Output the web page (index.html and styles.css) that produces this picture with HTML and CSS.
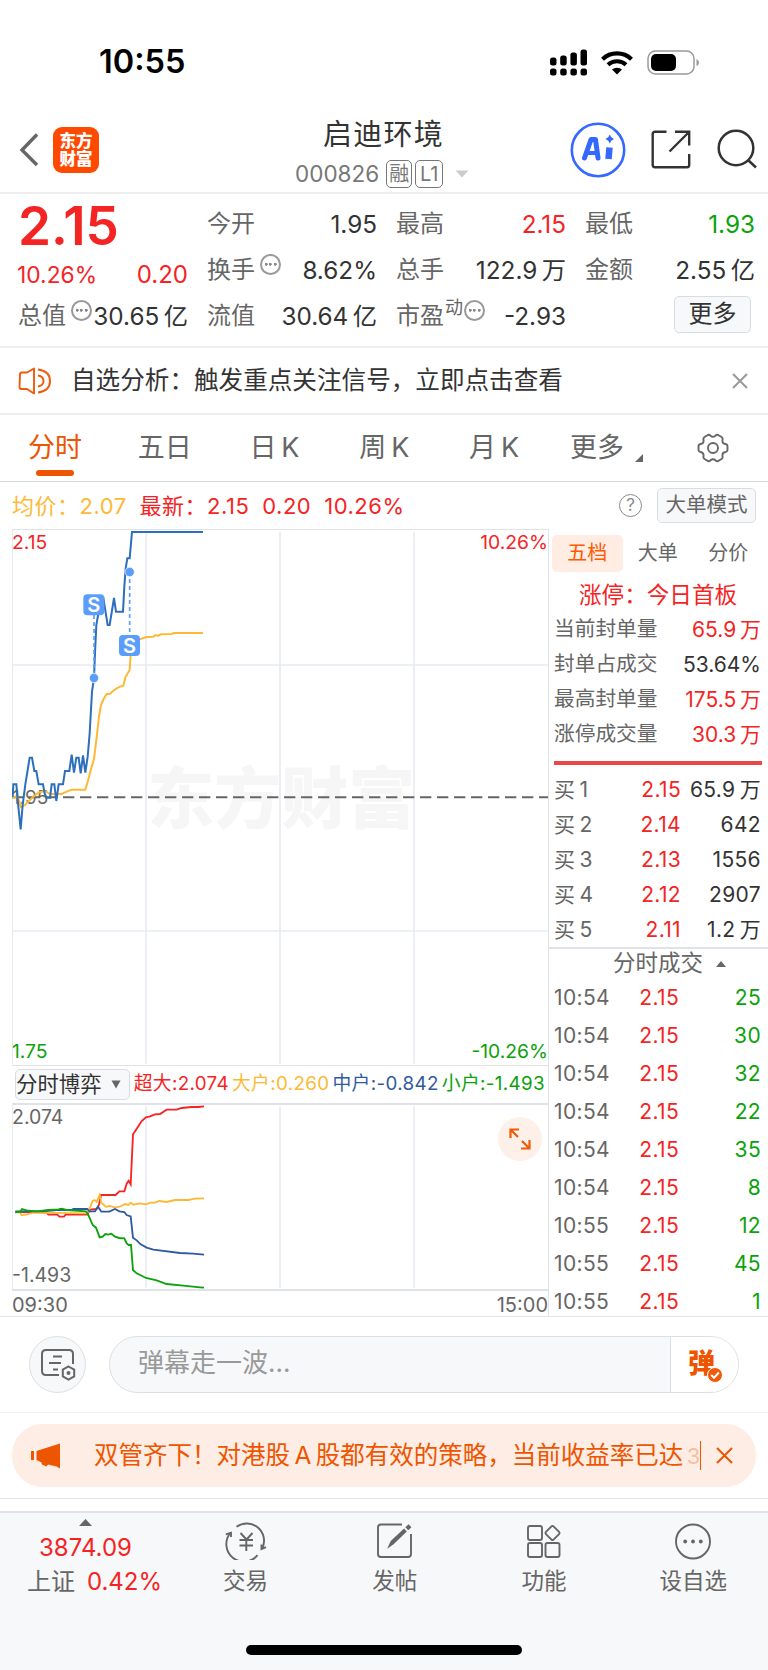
FILE: index.html
```html
<!DOCTYPE html>
<html lang="zh-CN">
<head>
    <meta charset="UTF-8">
    <meta name="viewport" content="width=device-width, initial-scale=1.0">
    <title>启迪环境 000826</title>
    <link rel="stylesheet" href="styles.css">
</head>
<body>
    <div class="status-bar">
        <span class="clock">10:55</span>
        <div class="status-icons">
            <svg class="signal" width="38" height="27" viewBox="0 0 38 27">
                <rect x="0" y="8.500" width="6.500" height="8" rx="2.500"/>
                <rect x="10.200" y="6.500" width="6.500" height="10" rx="2.500"/>
                <rect x="20.400" y="3.500" width="6.500" height="13" rx="2.500"/>
                <rect x="30.500" y="0.500" width="6.500" height="16" rx="2.500"/>
                <rect x="0" y="19.500" width="6.500" height="7" rx="2.500"/>
                <rect x="10.200" y="19.500" width="6.500" height="7" rx="2.500"/>
                <rect x="20.400" y="19.500" width="6.500" height="7" rx="2.500"/>
                <rect x="30.500" y="19.500" width="6.500" height="7" rx="2.500"/>
            </svg>
            <svg class="wifi" width="32" height="24" viewBox="0 0 32 24">
                <path d="M1.500 8.200 A21 21 0 0 1 30.500 8.200" fill="none" stroke="#000" stroke-width="4.200"/>
                <path d="M7 13.800 A13 13 0 0 1 25 13.800" fill="none" stroke="#000" stroke-width="4"/>
                <path d="M16 23.500 L11 18.600 A7.500 7.500 0 0 1 21 18.600 Z"/>
            </svg>
            <svg class="battery" width="53" height="26" viewBox="0 0 53 26">
                <rect x="1" y="1" width="46" height="23" rx="7.500" fill="none" stroke="#999" stroke-width="1.500"/>
                <rect x="4" y="4" width="25" height="17" rx="5"/>
                <path d="M49.500 9 Q52 10 52 12.500 Q52 15 49.500 16 Z" fill="#999"/>
            </svg>
        </div>
    </div>

    <header class="header">
        <div class="header-left">
            <svg width="20" height="34" viewBox="0 0 20 34" fill="none" stroke="#666" stroke-width="3.400">
                <path d="M18 1.500 L3 17 L18 32"/>
            </svg>
            <div class="logo">东方<br>财富</div>
        </div>
        <div class="header-title">
            <h1>启迪环境</h1>
            <div class="code">
                <span>000826</span>
                <b>融</b>
                <b class="level">L1</b>
                <svg width="14" height="8" viewBox="0 0 14 8"><path d="M0.500 0.500 H13.500 L7 7.500 Z" fill="#ccc"/></svg>
            </div>
        </div>
        <div class="header-right">
            <svg width="56" height="56" viewBox="0 0 56 56" fill="none" stroke="#3568ff">
                <circle cx="28" cy="28" r="26.200" stroke-width="2.600"/>
                <path d="M14.500 36 L21 17.500 H25.500 L28 36" stroke-width="5" stroke-linejoin="round" stroke-linecap="round"/>
                <path d="M18 31 H27" stroke-width="4"/>
                <path d="M39.500 25.500 L38.500 37" stroke-width="6.500"/>
                <path d="M39.800 12.500 Q40.800 16 44 17 Q40.800 18 39.800 21.500 Q38.800 18 35.500 17 Q38.800 16 39.800 12.500 Z" fill="#3568ff" stroke="none"/>
            </svg>
            <svg width="40" height="40" viewBox="0 0 40 40" fill="none" stroke="#333" stroke-width="2.400">
                <path d="M15.500 1.800 H4 Q1.700 1.800 1.700 4 V35 Q1.700 37.200 4 37.200 H36 Q38.200 37.200 38.200 35 V24"/>
                <path d="M24 1.800 H38.200 V15.500 M38 2 L18.500 21.500"/>
            </svg>
            <svg width="41" height="41" viewBox="0 0 41 41" fill="none" stroke="#333" stroke-width="2.500">
                <circle cx="19" cy="19" r="17.300"/>
                <path d="M31 31 L39 38.500"/>
            </svg>
        </div>
    </header>

    <section class="quote">
        <div class="quote-col">
            <div class="big-price red">2.15</div>
            <div class="cell change red"><span>10.26%</span><span class="diff">0.20</span></div>
            <div class="cell"><label>总值</label><i class="tip"></i><span>30.65&thinsp;亿</span></div>
        </div>
        <div class="quote-col">
            <div class="cell"><label>今开</label><span>1.95</span></div>
            <div class="cell"><label>换手</label><i class="tip"></i><span>8.62%</span></div>
            <div class="cell"><label>流值</label><span>30.64&thinsp;亿</span></div>
        </div>
        <div class="quote-col">
            <div class="cell"><label>最高</label><span class="red">2.15</span></div>
            <div class="cell"><label>总手</label><span>122.9&thinsp;万</span></div>
            <div class="cell"><label>市盈</label><sup>动</sup><i class="tip near"></i><span>-2.93</span></div>
        </div>
        <div class="quote-col">
            <div class="cell"><label>最低</label><span class="green">1.93</span></div>
            <div class="cell"><label>金额</label><span>2.55&thinsp;亿</span></div>
            <div class="cell"><button class="more">更多</button></div>
        </div>
    </section>

    <section class="notice">
        <svg width="34" height="28" viewBox="0 0 34 28" fill="none" stroke="#f05a0a" stroke-width="1.900" stroke-linejoin="round">
            <path d="M16 1.500 L9 5.500 H3.500 Q2 5.500 2 7.500 L1.500 20 Q1.500 22 3.500 22 H9 L16 26.500 Z"/>
            <path d="M20 8.500 Q25.500 9.500 25.500 14 Q25.500 18.500 20 19.500"/>
            <path d="M20 2.500 Q32 4 32 14 Q32 24 20 25.500"/>
        </svg>
        <p>自选分析：触发重点关注信号，立即点击查看</p>
        <svg width="16" height="16" viewBox="0 0 16 16" stroke="#999" stroke-width="2"><path d="M1 1 L15 15 M15 1 L1 15"/></svg>
    </section>

    <nav class="tabs">
        <a class="active">分时</a>
        <a>五日</a>
        <a>日&thinsp;K</a>
        <a>周&thinsp;K</a>
        <a>月&thinsp;K</a>
        <a class="tab-more">更多<svg width="8" height="8" viewBox="0 0 8 8"><path d="M8 0 V8 H0 Z" fill="#666"/></svg></a>
        <a class="tab-gear">
            <svg width="32" height="30" viewBox="0 0 32 30" fill="none" stroke="#666" stroke-width="1.900" stroke-linejoin="round">
                <path d="M10 2.500 Q12 1 13.500 2.700 Q16 5 18.500 2.700 Q20 1 22 2.500 L24.500 4 Q26 5 25.500 7 Q25 10.500 28.500 11 Q30.500 11.500 30.500 13 V17 Q30.500 18.500 28.500 19 Q25 19.500 25.500 23 Q26 25 24.500 26 L22 27.500 Q20 29 18.500 27.300 Q16 25 13.500 27.300 Q12 29 10 27.500 L7.500 26 Q6 25 6.500 23 Q7 19.500 3.500 19 Q1.500 18.500 1.500 17 V13 Q1.500 11.500 3.500 11 Q7 10.500 6.500 7 Q6 5 7.500 4 Z"/>
                <circle cx="16" cy="15" r="5"/>
            </svg>
        </a>
    </nav>

    <div class="chart-info">
        <span class="avg">均价：2.07</span>
        <span class="latest red">最新：2.15</span>
        <span class="red">0.20</span>
        <span class="red">10.26%</span>
        <i class="help">?</i>
        <button>大单模式</button>
    </div>

    <main class="market">
        <div class="charts">
            <div class="price-chart">
                <svg width="536" height="536" viewBox="36 27 1608 1608" fill="none">
                    <!-- grid -->
                    <path class="grid" d="M438 36 V1632 M840 36 V1632 M1242 36 V1632 M36 435 H1644 M36 1233 H1644"/>
                    <text class="watermark" x="442" y="910">东方财富</text>
                    <path class="zero" d="M36 832 H1644"/>
                    <text class="zero-label" x="36" y="851">1.95</text>
                    <polyline class="avg-line" points="37,835 50,828 58,845 63,862 75,855 85,845 100,830 115,818 130,814 140,816 150,822 185,822 200,815 215,809 256,809 263,785 275,740 282,717 289,660 297,590 303,555 312,535 320,522 330,521 340,512 350,505 362,499 370,497 376,472 389,450 392,405 398,375 410,362 425,356 440,351 460,350 465,346 475,347 482,343 515,342 522,339 609,339"/>
                    <polyline class="price-line" points="38,830 40,793 49,793 54,850 62,928 68,855 76,793 89,713 96,713 103,753 109,753 116,793 129,793 134,820 140,833 150,833 155,793 163,793 169,843 176,793 189,793 195,753 208,753 215,704 222,758 229,713 236,713 242,760 249,706 256,758 263,710 269,640 276,515 282,475 285,400 289,315 297,270 302,234 310,234 323,315 329,315 342,234 348,275 369,275 373,200 377,145 382,115 389,115 396,36 609,36"/>
                    <!-- signal markers -->
                    <path class="marker-line" d="M282 285 V474 M389 156 V345"/>
                    <circle class="marker-dot" cx="282" cy="474" r="14"/>
                    <circle class="marker-dot" cx="389" cy="156" r="14"/>
                    <rect class="marker-box" x="250" y="223" width="63" height="63" rx="12"/>
                    <rect class="marker-box" x="357" y="345" width="63" height="63" rx="12"/>
                    <text class="marker-text" x="281.500" y="276">S</text>
                    <text class="marker-text" x="388.500" y="398">S</text>
                </svg>
                <span class="label top-left red">2.15</span>
                <span class="label top-right red">10.26%</span>
                <span class="label bottom-left green">1.75</span>
                <span class="label bottom-right green">-10.26%</span>
            </div>
            <div class="legend">
                <button>分时博弈<svg width="10" height="9" viewBox="0 0 10 9"><path d="M0.500 0.500 H9.500 L5 8.500 Z" fill="#666"/></svg></button>
                <span class="red">超大:2.074</span>
                <span class="avg">大户:0.260</span>
                <span class="blue">中户:-0.842</span>
                <span class="green">小户:-1.493</span>
            </div>
            <div class="game-chart">
                <svg width="536" height="184" viewBox="36 222 1608 552" fill="none">
                    <path class="grid" d="M438 226 V770 M840 226 V770 M1242 226 V770"/>
                    <polyline stroke="#f52424" points="46,543 110,543 140,545 145,551 172,551 178,557 192,557 197,551 262,551 270,536 290,534 297,522 303,492 347,492 358,481 373,481 380,458 386,449 392,460 399,310 412,290 425,270 438,259 450,256 465,250 480,249 500,236 530,236 545,231 575,228 595,228 612,226"/>
                    <polyline stroke="#fdb935" points="46,545 60,543 65,553 80,550 100,545 262,547 270,530 278,510 284,507 290,512 299,492 304,515 318,527 330,525 345,530 362,526 375,519 385,522 392,515 400,521 420,517 438,520 452,515 465,515 478,510 500,513 525,507 565,507 585,503 612,502"/>
                    <polyline stroke="#2f5a9e" points="46,541 130,541 170,537 215,537 220,534 262,534 268,541 285,541 294,527 304,542 328,542 345,534 358,541 373,543 380,552 392,556 399,620 410,628 422,640 440,650 460,656 540,666 580,668 612,671"/>
                    <polyline stroke="#0ba20b" points="46,543 60,543 66,534 80,538 110,541 145,537 175,535 185,533 200,537 258,541 265,552 278,582 288,590 299,619 308,617 316,609 325,611 334,608 345,617 358,621 373,622 380,637 386,642 393,642 399,717 410,727 438,741 470,748 500,759 550,764 600,769 612,770"/>
                </svg>
                <span class="label top-left">2.074</span>
                <span class="label bottom-left">-1.493</span>
                <div class="expand">
                    <svg width="22" height="22" viewBox="0 0 22 22" fill="none" stroke="#f05a0a" stroke-width="2.200">
                        <path d="M1.500 10 V1.500 H10 M2 2 L9 9 M20.500 12 V20.500 H12 M20 20 L13 13"/>
                    </svg>
                </div>
            </div>
            <div class="time-axis"><span>09:30</span><span>15:00</span></div>
        </div>

        <aside class="side">
            <div class="side-tabs"><a class="active">五档</a><a>大单</a><a>分价</a></div>
            <div class="side-title red">涨停：今日首板</div>
            <dl class="stats">
                <div><dt>当前封单量</dt><dd class="red">65.9&thinsp;万</dd></div>
                <div><dt>封单占成交</dt><dd>53.64%</dd></div>
                <div><dt>最高封单量</dt><dd class="red">175.5&thinsp;万</dd></div>
                <div><dt>涨停成交量</dt><dd class="red">30.3&thinsp;万</dd></div>
            </dl>
            <div class="divider"></div>
            <div class="bids">
                <div><span>买&thinsp;1</span><span class="red">2.15</span><span>65.9&thinsp;万</span></div>
                <div><span>买&thinsp;2</span><span class="red">2.14</span><span>642</span></div>
                <div><span>买&thinsp;3</span><span class="red">2.13</span><span>1556</span></div>
                <div><span>买&thinsp;4</span><span class="red">2.12</span><span>2907</span></div>
                <div><span>买&thinsp;5</span><span class="red">2.11</span><span>1.2&thinsp;万</span></div>
            </div>
            <div class="trades-title">分时成交<svg width="10" height="6" viewBox="0 0 10 6"><path d="M0 6 H10 L5 0 Z" fill="#666"/></svg></div>
            <div class="trades">
                <div><span>10:54</span><span class="red">2.15</span><span class="green">25</span></div>
                <div><span>10:54</span><span class="red">2.15</span><span class="green">30</span></div>
                <div><span>10:54</span><span class="red">2.15</span><span class="green">32</span></div>
                <div><span>10:54</span><span class="red">2.15</span><span class="green">22</span></div>
                <div><span>10:54</span><span class="red">2.15</span><span class="green">35</span></div>
                <div><span>10:54</span><span class="red">2.15</span><span class="green">8</span></div>
                <div><span>10:55</span><span class="red">2.15</span><span class="green">12</span></div>
                <div><span>10:55</span><span class="red">2.15</span><span class="green">45</span></div>
                <div><span>10:55</span><span class="red">2.15</span><span class="green">1</span></div>
            </div>
        </aside>
    </main>

    <section class="barrage">
        <div class="barrage-set">
            <svg width="36" height="34" viewBox="0 0 36 34" fill="none" stroke="#666" stroke-width="2">
                <path d="M33 16 V6 Q33 2 29 2 H6 Q2 2 2 6 V23 Q2 27 6 27 H19"/>
                <path d="M13 8.500 H22 M9 15 H21 M13 21.500 H18"/>
                <path d="M28.500 18.500 L34.200 21.700 V28.300 L28.500 31.500 L22.800 28.300 V21.700 Z"/>
                <circle cx="28.500" cy="25" r="1" fill="#666"/>
            </svg>
        </div>
        <div class="barrage-input">
            <span>弹幕走一波...</span>
            <div class="barrage-send">弹<svg width="16" height="16" viewBox="0 0 16 16">
                <circle cx="8" cy="8" r="7.500" fill="#f05a0a" stroke="#fff"/>
                <path d="M4.200 8 L7 10.800 L11.800 5.500" fill="none" stroke="#fff" stroke-width="2"/>
            </svg></div>
        </div>
    </section>

    <section class="promo-wrap">
        <div class="promo">
            <svg width="30" height="26" viewBox="0 0 30 26" fill="#ee5500">
                <path d="M0 8 H3 V17 H0 Z M5.500 8 L29 0.500 V25.500 L25.500 23.500 L17 21.500 L15.500 23.500 L11 21.500 L10.500 19.500 L5.500 17 Z"/>
            </svg>
            <p>双管齐下！对港股&thinsp;A&thinsp;股都有效的策略，当前收益率已达&thinsp;<span>3</span></p>
            <svg class="promo-close" width="17" height="17" viewBox="0 0 17 17" stroke="#ee5500" stroke-width="2"><path d="M1 1 L16 16 M16 1 L1 16"/></svg>
        </div>
    </section>

    <footer class="bottom-bar">
        <div class="index">
            <svg width="13" height="7" viewBox="0 0 13 7"><path d="M0 7 H13 L6.500 0 Z" fill="#666"/></svg>
            <span class="red">3874.09</span>
            <div>上证<span class="red">0.42%</span></div>
        </div>
        <div class="bar-item">
            <svg width="42" height="38" viewBox="0 0 42 38" fill="none" stroke="#666" stroke-width="1.900">
                <path d="M11.500 4.800 A17.300 17.300 0 0 1 37.200 26.500 M32.500 33.200 A17.300 17.300 0 0 1 5.300 11"/>
                <path d="M0.800 12.300 L6 10.800 V15 M36.500 22.500 V27 L41 25.200"/>
                <path d="M15.500 11 L21.500 17.500 L27.500 11 M14.500 18 H28 M14.500 23.500 H28 M21.300 17.500 V29"/>
            </svg>
            <span>交易</span>
        </div>
        <div class="bar-item">
            <svg width="38" height="38" viewBox="0 0 38 38" fill="none" stroke="#666" stroke-width="1.900">
                <path d="M26 2.500 H5 Q2 2.500 2 5.500 V32 Q2 35 5 35 H32 Q35 35 35 32 V12"/>
                <path d="M13.500 24 L15.500 19.500 L28 7.800 L29.500 9.500 L17 21.500 Z" fill="#666"/>
                <path d="M30.800 6.700 L34 3.700" stroke-width="4.200"/>
            </svg>
            <span>发帖</span>
        </div>
        <div class="bar-item">
            <svg width="36" height="38" viewBox="0 0 36 38" fill="none" stroke="#666" stroke-width="1.900">
                <rect x="2" y="4" width="14" height="14" rx="2"/>
                <rect x="2" y="21" width="14" height="14" rx="2"/>
                <rect x="19.500" y="21" width="14" height="14" rx="2"/>
                <rect x="-5.400" y="-5.400" width="10.800" height="10.800" rx="1.500" transform="translate(26.500 11) rotate(45)"/>
            </svg>
            <span>功能</span>
        </div>
        <div class="bar-item">
            <svg width="38" height="38" viewBox="0 0 38 38" fill="none" stroke="#666" stroke-width="1.900">
                <circle cx="19" cy="19.500" r="17"/>
                <g fill="#666" stroke="none"><circle cx="11.200" cy="19.500" r="1.900"/><circle cx="19" cy="19.500" r="1.900"/><circle cx="26.800" cy="19.500" r="1.900"/></g>
            </svg>
            <span>设自选</span>
        </div>
        <div class="home-indicator"></div>
    </footer>
</body>
</html>
```
FILE: styles.css
```css
* {
    box-sizing: border-box;
    margin: 0;
    padding: 0;
}

body {
    width: 768px;
    height: 1670px;
    background: #fff;
    color: #333;
    font-family: Inter, "Noto Sans CJK SC", sans-serif;
    line-height: 1;
    white-space: nowrap;
    overflow: hidden;
}

svg {
    display: block;
    flex: none;
}

i, sup {
    font-style: normal;
}

button {
    font-family: inherit;
    color: #333;
    background: #f7f8fa;
    border: 1px solid #d9dce3;
    border-radius: 5px;
    line-height: 1;
}

.red {
    color: #f52424;
}

.green {
    color: #0ba20b;
}

.blue {
    color: #2f5a9e;
}

.avg {
    color: #fdb935;
}

/* status bar */
.status-bar {
    height: 112px;
    padding: 13px 68px 0 99px;
    display: flex;
    align-items: center;
    justify-content: space-between;
    color: #000;
}

.clock {
    font-size: 32.500px;
    font-weight: 600;
}

.status-icons {
    display: flex;
    align-items: center;
}

.wifi {
    margin-left: 13px;
}

.battery {
    margin-left: 14px;
}

.signal {
    margin-top: -1px;
}

/* header */
.header {
    height: 82px;
    display: grid;
    grid-template-columns: 250px 268px 250px;
    border-bottom: 2px solid #eee;
}

.header-left {
    display: flex;
    align-items: center;
    padding: 0 0 5px 19px;
    height: 80px;
}

.logo {
    width: 46px;
    height: 46px;
    margin-left: 14px;
    padding-top: 5px;
    border-radius: 9px;
    background: #ff4800;
    color: #fff;
    font-size: 16.500px;
    font-weight: 900;
    line-height: 18px;
    text-align: center;
}

.header-title {
    text-align: center;
    padding: 8px 1px 0 0;
}

h1 {
    font-size: 29px;
    font-weight: 400;
    letter-spacing: 1.300px;
    line-height: 30px;
}

.code {
    display: flex;
    align-items: center;
    margin: 10px 0 0 45px;
    color: #777;
    font-size: 22.500px;
}

.code b {
    width: 26px;
    height: 28px;
    margin-left: 7px;
    border: 1px solid #777;
    border-radius: 5px;
    font-size: 20px;
    font-weight: 400;
    line-height: 26px;
}

.code .level {
    width: 28px;
    margin-left: 3px;
    font-size: 20px;
}

.code svg {
    margin-left: 12px;
}

.header-right {
    display: flex;
    align-items: center;
    height: 80px;
    padding: 0 0 5px 52px;
}

.header-right svg + svg {
    margin-left: 25px;
}

.header-right svg:last-child {
    margin-left: 26px;
}

/* quote */
.quote {
    height: 154px;
    padding: 7px 0 0 18px;
    display: grid;
    grid-template-columns: repeat(4, 170px);
    column-gap: 19px;
    border-bottom: 2px solid #eceef2;
}

.cell {
    height: 46px;
    display: flex;
    align-items: center;
    font-size: 24.300px;
}

.cell label {
    color: #666;
    font-size: 24px;
}

.cell span {
    margin-left: auto;
}

.big-price {
    height: 46px;
    font-size: 53px;
    font-weight: 600;
    line-height: 51px;
}

.change {
    padding-top: 10px;
    font-size: 22.800px;
}

.change span:first-child {
    margin-left: -1px;
}

.change .diff {
    font-size: 24px;
}

.cell sup {
    font-size: 18px;
    color: #666;
    margin: -16px 0 0 1px;
}

.tip {
    width: 21px;
    height: 21px;
    margin: -11px 0 0 5px;
    flex: none;
    border: 2px solid #999;
    border-radius: 50%;
    background: radial-gradient(circle, #888 1.200px, transparent 1.700px) center / 4.500px 4.500px no-repeat,
        radial-gradient(circle, #888 1.200px, transparent 1.700px) 2px center / 4.500px 4.500px no-repeat,
        radial-gradient(circle, #888 1.200px, transparent 1.700px) 10.500px center / 4.500px 4.500px no-repeat;
}

.tip.near {
    margin-left: 1px;
}

.more {
    width: 77px;
    height: 37px;
    margin: -4px 4px 0 auto;
    font-size: 24px;
}

/* notice */
.notice {
    height: 67px;
    padding: 0 20px 0 18px;
    display: flex;
    align-items: center;
    border-bottom: 2px solid #eee;
}

.notice p {
    flex: 1;
    margin-left: 19px;
    font-size: 24.600px;
}

/* period tabs */
.tabs {
    height: 67px;
    display: flex;
    border-bottom: 1px solid #d3d7de;
    color: #666;
    font-size: 27px;
    line-height: 66px;
}

.tabs a {
    width: 109.800px;
    display: flex;
    flex-direction: column;
    align-items: center;
}

.tabs .active {
    color: #ee5500;
}

.tabs .active::after {
    content: "";
    width: 38px;
    height: 6px;
    margin-top: -11px;
    border-radius: 3px;
    background: #ee5500;
}

.tabs .tab-more {
    flex-direction: row;
    padding-left: 21px;
}

.tab-more svg {
    margin: 20px 0 0 11px;
}

.tabs .tab-gear {
    width: 108px;
    padding: 18px 0 0 0;
}

/* info row */
.chart-info {
    height: 47px;
    padding: 0 12px;
    display: flex;
    align-items: center;
    font-size: 22px;
    letter-spacing: 0.500px;
}

.chart-info span {
    margin-right: 13px;
}

.help {
    width: 23px;
    height: 23px;
    margin-left: auto;
    border: 1.500px solid #888;
    border-radius: 50%;
    color: #888;
    font-size: 17px;
    line-height: 21px;
    text-align: center;
    letter-spacing: 0;
}

.chart-info button {
    width: 99px;
    height: 35px;
    margin-left: 15px;
    color: #666;
    font-size: 20.500px;
}

/* market */
.market {
    height: 788px;
    display: flex;
    border-bottom: 1px solid #e4e6eb;
}

.charts {
    width: 549px;
    padding-left: 12px;
    border-right: 1px solid #dfe2e9;
}

.price-chart, .game-chart {
    position: relative;
    border-left: 1px solid #e8eaf0;
}

.price-chart {
    height: 537px;
    border-top: 1px solid #e2e2e2;
    border-bottom: 1px solid #e2e2e2;
}

.price-chart svg, .game-chart > svg {
    margin-left: -1px;
    margin-top: -1px;
}

.grid {
    stroke: #e8ebf1;
    stroke-width: 5;
}

.watermark {
    fill: #f6f6f6;
    font-size: 201px;
    font-weight: 900;
}

.zero {
    stroke: #666;
    stroke-width: 6;
    stroke-dasharray: 34 17;
}

.zero-label {
    fill: #666;
    font-size: 57px;
}

.price-line, .avg-line {
    stroke: #2c6fbd;
    stroke-width: 6;
}

.avg-line {
    stroke: #fdb935;
}

.marker-line {
    stroke: #5b9dfb;
    stroke-width: 5;
    stroke-dasharray: 12 9;
}

.marker-dot {
    fill: #5b9dfb;
    stroke: #fff;
    stroke-width: 2;
}

.marker-box {
    fill: #5b9dfb;
}

.marker-text {
    fill: #fff;
    font-size: 60px;
    font-weight: 600;
    text-anchor: middle;
}

.label {
    position: absolute;
    font-size: 19.300px;
    color: #666;
}

.label.red {
    color: #f52424;
}

.label.green {
    color: #0ba20b;
}

.top-left {
    left: -1px;
    top: 3px;
}

.top-right {
    right: 0;
    top: 3px;
}

.bottom-left {
    left: -1px;
    bottom: 4px;
}

.bottom-right {
    right: 0;
    bottom: 4px;
}

.legend {
    height: 37px;
    display: flex;
    align-items: center;
    padding-left: 3px;
    font-size: 18.800px;
    letter-spacing: 0.350px;
}

.legend button {
    width: 115px;
    height: 31px;
    display: flex;
    align-items: center;
    font-size: 21.400px;
    margin-right: 4px;
}

.legend button svg {
    margin-left: 9px;
}

.legend span {
    margin-right: 3px;
}

.game-chart {
    height: 188px;
    border-top: 2px solid #dfe2e9;
    border-bottom: 2px solid #dfe2e9;
}

.game-chart > svg {
    margin-top: 0;
}

.game-chart polyline {
    stroke-width: 5.500;
}

.game-chart .label {
    font-size: 19.500px;
}

.expand {
    position: absolute;
    right: 6px;
    top: 12px;
    width: 44px;
    height: 44px;
    border-radius: 50%;
    background: #fdf0e9;
    display: flex;
    align-items: center;
    justify-content: center;
}

.time-axis {
    height: 25px;
    display: flex;
    align-items: center;
    justify-content: space-between;
    padding-top: 2px;
    color: #666;
    font-size: 20px;
}

/* order book */
.side {
    width: 219px;
    padding: 6px 0 0 5px;
    font-size: 21px;
}

.side-tabs {
    display: flex;
    margin-left: -2px;
    color: #666;
    font-size: 20px;
    line-height: 37px;
    text-align: center;
}

.side-tabs a {
    width: 70.500px;
    border-radius: 5px;
}

.side-tabs .active {
    background: #ffece3;
    color: #ff5a00;
}

.side-title {
    height: 40px;
    padding-left: 25px;
    font-size: 22.600px;
    line-height: 46px;
}

.stats div {
    height: 35px;
    display: flex;
    align-items: center;
    justify-content: space-between;
    padding-right: 7px;
}

.stats dt {
    color: #666;
    font-size: 20.700px;
}

.divider {
    width: 208px;
    height: 4px;
    margin: 9px 0 7px;
    background: #e94848;
}

.bids div, .trades div {
    height: 35px;
    display: grid;
    grid-template-columns: 54px 73px 80px;
    align-items: center;
}

.bids, .trades {
    letter-spacing: 0.350px;
}

.bids span:nth-child(n+2), .trades span:nth-child(n+2) {
    text-align: right;
}

.bids span:first-child, .trades span:first-child {
    color: #666;
}

.trades-title {
    height: 31px;
    margin-left: -5px;
    padding-left: 64px;
    border-top: 2px solid #dfe2e9;
    display: flex;
    align-items: center;
    color: #666;
    font-size: 22.500px;
}

.trades-title svg {
    margin-left: 13px;
}

.trades div {
    height: 38px;
    grid-template-columns: 56px 69px 82px;
}

/* barrage */
.barrage {
    height: 96px;
    padding: 19px 29px 0;
    display: flex;
    border-bottom: 1px solid #eef0f3;
}

.barrage-set {
    width: 57px;
    height: 57px;
    border: 1px solid #dcdfe6;
    border-radius: 50%;
    background: #f7f8fa;
    display: flex;
    align-items: center;
    justify-content: center;
}

.barrage-input {
    width: 630px;
    height: 57px;
    margin-left: 23px;
    border: 1px solid #dcdfe6;
    border-radius: 29px;
    background: #f7f8fa;
    overflow: hidden;
    display: flex;
    color: #999;
    font-size: 26px;
    line-height: 51px;
}

.barrage-input span {
    flex: 1;
    padding-left: 28px;
}

.barrage-send {
    position: relative;
    width: 68px;
    padding-left: 17px;
    border-left: 1px solid #dcdfe6;
    background: #fff;
    color: #ee5500;
    font-size: 27px;
    font-weight: 900;
    line-height: 54px;
}

.barrage-send svg {
    position: absolute;
    left: 36px;
    top: 30px;
}

/* promo */
.promo-wrap {
    height: 86px;
    padding: 11px 12px 0;
    border-bottom: 1px solid #e4e6eb;
}

.promo {
    height: 63px;
    padding: 0 23px 0 19px;
    border-radius: 31px;
    background: #fdede4;
    display: flex;
    align-items: center;
    color: #ee5500;
    font-size: 24.500px;
}

.promo p {
    width: 608px;
    height: 29px;
    margin-left: 33px;
    line-height: 29px;
    border-right: 1px solid #ee5500;
}

.promo p span {
    margin-left: -1px;
    font-size: 22px;
    opacity: 0.300;
}

.promo-close {
    margin-left: 15px;
}

/* bottom bar */
.bottom-bar {
    position: relative;
    height: 160px;
    margin-top: 12px;
    border-top: 2px solid #dfe2e9;
    background: #f7f8fa;
    display: grid;
    grid-template-columns: 171px repeat(4, 149.250px);
    color: #666;
}

.index {
    padding-top: 6px;
    display: flex;
    flex-direction: column;
    align-items: center;
    font-size: 24px;
}

.index > span {
    margin-top: 10px;
}

.index div {
    margin: 10px 0 0 18px;
}

.index div span {
    margin-left: 12px;
}

.bar-item {
    padding-top: 9px;
    display: flex;
    flex-direction: column;
    align-items: center;
    font-size: 22.500px;
}

.bar-item span {
    margin-top: 10px;
}

.home-indicator {
    position: absolute;
    left: 246px;
    bottom: 16px;
    width: 276px;
    height: 10px;
    border-radius: 5px;
    background: #000;
}
```
